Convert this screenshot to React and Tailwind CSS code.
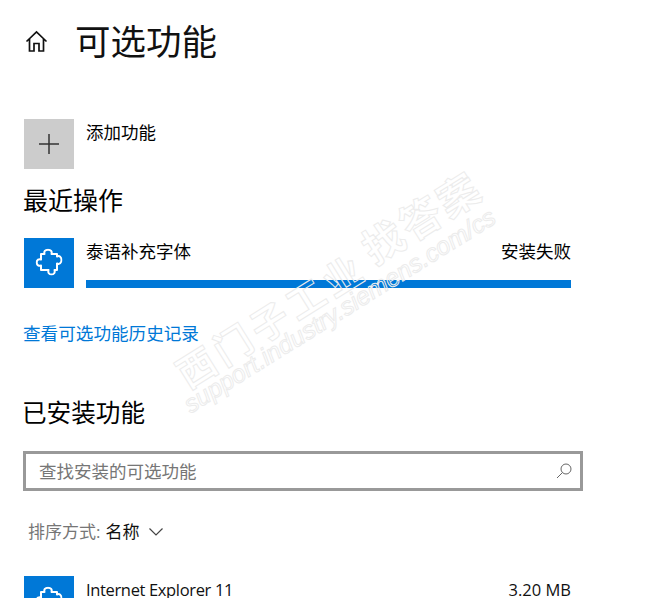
const font = { fontFamily: '"Open Sans", "Noto Sans CJK SC", sans-serif' };

function Puzzle() {
  return (
    <svg width="27" height="27" viewBox="0 0 27 27" fill="none" stroke="#fff" strokeWidth="2" strokeLinejoin="round" className="-translate-x-[0.5px] -translate-y-[1.5px]">
      <path d="M5.500 5.500H9C8.300 3 9.500 1.200 12.500 1.200C15.500 1.200 16.700 3 16 5.500H21.500V8C24 6.800 26 8.500 26 11.500C26 14.500 24 16.200 21.500 15V21.500H19C19.700 24 18.500 26 16 26C13.500 26 12.300 24 13 21.500H5.500V17C3.500 18 1.200 16.500 1.200 14C1.200 11.500 3.500 10 5.500 11Z" />
    </svg>
  );
}

function Tile({ children, className }) {
  return <div className={`w-[50px] h-[50px] shrink-0 flex items-center justify-center ${className}`}>{children}</div>;
}

function Watermark() {
  const cls = "absolute whitespace-nowrap text-transparent [-webkit-text-stroke:1px_#ececec] origin-left -rotate-[32deg]";
  return (
    <div className="absolute inset-0 pointer-events-none overflow-hidden" aria-hidden="true">
      <div className={`${cls} left-[180px] top-[358px] text-[38px] font-bold leading-none tracking-[5px]`}>西门子工业</div>
      <div className={`${cls} left-[366px] top-[232px] text-[41px] font-bold leading-none tracking-[3px]`}>找答案</div>
      <div className={`${cls} left-[186px] top-[394px] text-[25px] leading-none italic`} style={{ fontFamily: '"Liberation Sans", sans-serif' }}>support.industry.siemens.com/cs</div>
    </div>
  );
}

export default function App() {
  return (
    <div className="relative w-[665px] h-[598px] overflow-hidden bg-white text-black" style={font}>
      <div className="flex items-center pl-[24px] pt-[18px] h-[64px]">
        <svg width="24" height="24" viewBox="0 0 24 24" fill="none" stroke="#111" strokeWidth="1.7" className="shrink-0">
          <path d="M2.500 12.500 12.500 3l10 9.500M5.500 10v12h4.500v-7.500h5V22h4.500V10" strokeLinejoin="miter" />
        </svg>
        <h1 className="ml-[27px] text-[35.5px] leading-[46px] font-normal text-[#111]">可选功能</h1>
      </div>

      <div className="flex mt-[55px] ml-[24px]">
        <Tile className="bg-[#cccccc]">
          <svg width="20" height="20" viewBox="0 0 20 20" stroke="#333" strokeWidth="1.500"><path d="M0 10h20M10 0v20" /></svg>
        </Tile>
        <div className="ml-[12px] text-[17.5px] leading-[26px]">添加功能</div>
      </div>

      <h2 className="ml-[23px] mt-[14px] text-[25px] leading-[34px] font-normal">最近操作</h2>

      <div className="flex mt-[21px] ml-[24px] w-[547px]">
        <Tile className="bg-[#0078d7]"><Puzzle /></Tile>
        <div className="ml-[12px] flex-1 flex flex-col justify-between">
          <div className="flex justify-between text-[17.5px] leading-[26px]">
            <span>泰语补充字体</span>
            <span>安装失败</span>
          </div>
          <div className="h-[8px] bg-[#0078d7]" />
        </div>
      </div>

      <div className="ml-[23px] mt-[32px] text-[17.6px] leading-[26px] text-[#0078d7]">查看可选功能历史记录</div>

      <h2 className="ml-[22px] mt-[50px] text-[24.6px] leading-[34px] font-normal">已安装功能</h2>

      <div className="ml-[23px] mt-[21px] w-[560px] h-[40px] border-[3px] border-[#999999] flex items-center justify-between pl-[13px] pr-[8px]">
        <span className="text-[17.5px] text-[#767676] leading-[28px]">查找安装的可选功能</span>
        <svg width="16" height="16" viewBox="0 0 16 16" fill="none" stroke="#666" strokeWidth="1">
          <circle cx="10" cy="6" r="5" /><path d="M6.500 9.500 1 15" />
        </svg>
      </div>

      <div className="flex items-center ml-[28px] mt-[27px] h-[28px] text-[17px]">
        <span className="text-[#767676]">排序方式:</span>
        <span className="ml-[5px] text-[#111]">名称</span>
        <svg width="14" height="8" viewBox="0 0 14 8" fill="none" stroke="#444" strokeWidth="1.200" className="ml-[10px]"><path d="M.5.5 7 7l6.500-6.500" /></svg>
      </div>

      <div className="flex mt-[30px] ml-[24px] w-[547px]">
        <Tile className="bg-[#0078d7]"><Puzzle /></Tile>
        <div className="ml-[12px] flex-1 flex justify-between text-[16.5px] leading-[28px] text-[#111]">
          <span className="tracking-[-0.35px]">Internet Explorer 11</span>
          <span>3.20 MB</span>
        </div>
      </div>

      <Watermark />
    </div>
  );
}
